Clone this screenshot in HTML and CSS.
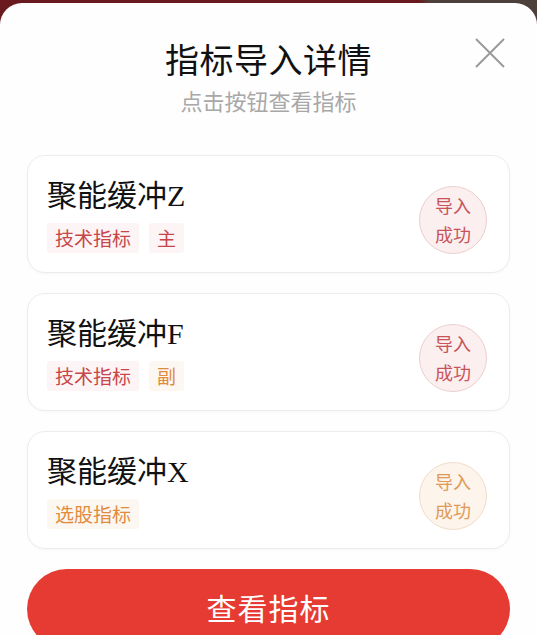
FILE: index.html
```html
<!DOCTYPE html>
<html lang="zh">
<head>
<meta charset="utf-8">
<link rel="stylesheet" href="styles.css">
</head>
<body>
<div class="backdrop">
  <div class="sheet">
    <header class="head">
      <h1 class="title">指标导入详情</h1>
      <p class="sub">点击按钮查看指标</p>
      <button class="close" aria-label="关闭">
        <svg width="32" height="32" viewBox="0 0 32 32"><path d="M2 2 L30 30 M30 2 L2 30" stroke="#9a9a9a" stroke-width="2" fill="none"/></svg>
      </button>
    </header>
    <div class="list">
      <div class="card">
        <div class="info">
          <div class="name">聚能缓冲Z</div>
          <div class="tags"><span class="tag red">技术指标</span><span class="tag red">主</span></div>
        </div>
        <div class="badge red">导入<br>成功</div>
      </div>
      <div class="card">
        <div class="info">
          <div class="name">聚能缓冲F</div>
          <div class="tags"><span class="tag red">技术指标</span><span class="tag orange">副</span></div>
        </div>
        <div class="badge red">导入<br>成功</div>
      </div>
      <div class="card">
        <div class="info">
          <div class="name">聚能缓冲X</div>
          <div class="tags"><span class="tag orange">选股指标</span></div>
        </div>
        <div class="badge orange">导入<br>成功</div>
      </div>
    </div>
    <button class="cta">查看指标</button>
  </div>
</div>
</body>
</html>
```
FILE: styles.css
```css
* { box-sizing: border-box; }
html, body { margin: 0; padding: 0; }
body {
  width: 537px;
  height: 635px;
  overflow: hidden;
  font-family: "Noto Sans CJK SC", "Noto Sans", sans-serif;
  background: #fff;
}
.backdrop {
  padding-top: 3px;
  background: linear-gradient(90deg, #6a1a1e 0%, #6a1a1e 78%, #4d403b 80%, #4d403b 100%) top / 100% 24px no-repeat;
  height: 635px;
}
.sheet {
  background: #fefefe;
  border-radius: 22px 22px 0 0;
  height: 632px;
  padding: 0 27px 0 27px;
  display: flex;
  flex-direction: column;
}
.sheet > * { flex-shrink: 0; }
.head {
  position: relative;
  text-align: center;
  padding-top: 33px;
  height: 152px;
}
.title {
  margin: 0;
  font-size: 34px;
  font-weight: 400;
  line-height: 46px;
  color: #111;
  letter-spacing: 0.5px;
}
.sub {
  margin: 0;
  font-size: 22px;
  line-height: 36px;
  color: #a8a8a8;
}
.close {
  position: absolute;
  right: 4px;
  top: 34px;
  border: 0;
  background: none;
  padding: 0;
  width: 32px;
  height: 32px;
}
.list {
  display: flex;
  flex-direction: column;
  gap: 20px;
}
.card {
  height: 118px;
  flex-shrink: 0;
  border: 1px solid #ececec;
  border-radius: 18px;
  background: #fff;
  box-shadow: 0 1px 3px rgba(0,0,0,0.03);
  display: flex;
  align-items: center;
  justify-content: space-between;
  padding: 0 22px 0 19px;
}
.info {
  display: flex;
  flex-direction: column;
  gap: 9px;
  padding-top: 2px;
}
.name {
  font-family: "Liberation Serif", "Noto Sans CJK SC", serif;
  font-size: 30px;
  line-height: 36px;
  color: #111;
}
.tags {
  display: flex;
  gap: 10px;
}
.tag {
  font-size: 19px;
  line-height: 30px;
  padding: 0 8px;
  border-radius: 3px;
}
.tag.red { color: #c8454a; background: #fdf5f5; }
.tag.orange { color: #e08c3c; background: #fdf7f1; }
.badge {
  width: 68px;
  height: 68px;
  border-radius: 50%;
  display: flex;
  align-items: center;
  justify-content: center;
  text-align: center;
  font-size: 18px;
  line-height: 29px;
  margin-top: 12px;
}
.badge.red { background: #fbefef; border: 1px solid #ebcfd0; color: #c8545a; }
.badge.orange { background: #fdf4ec; border: 1px solid #f1dcc8; color: #e09a55; }
.cta {
  margin-top: 20px;
  height: 80px;
  border: 0;
  border-radius: 40px;
  background: #e63b33;
  color: #fff;
  font-family: "Noto Sans CJK SC", sans-serif;
  font-size: 30px;
  letter-spacing: 1px;
  padding-bottom: 6px;
}
```
